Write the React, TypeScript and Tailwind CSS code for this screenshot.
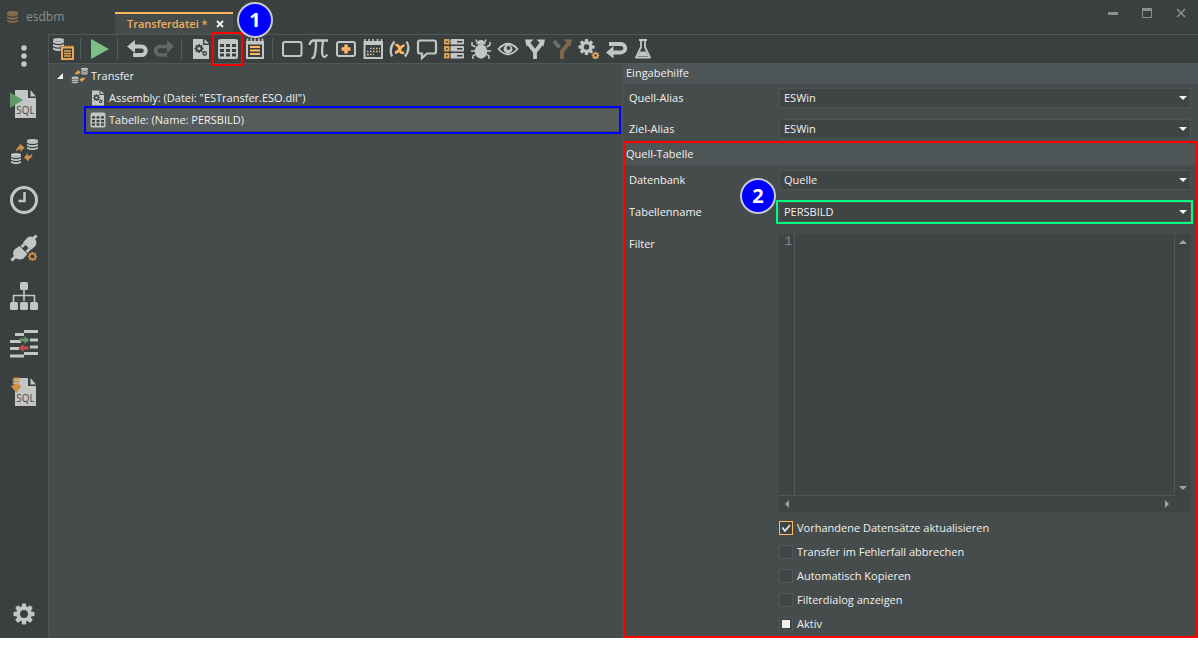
import { useState } from "react";
import type { ReactNode } from "react";

const LIGHT = "#c4c6c5";
const ORANGE = "#e9a654";
const DARK = "#3a4040";

function Icon({ size = 24, children }: { size?: number; children: ReactNode }) {
  return (
    <svg width={size} height={size} viewBox="0 0 24 24" fill="none" className="shrink-0" aria-hidden="true">
      {children}
    </svg>
  );
}

function Gear({ x, y, r, hole, color }: { x: number; y: number; r: number; hole: number; color: string }) {
  const w = r * 0.42;
  return (
    <g transform={`translate(${x} ${y})`}>
      {[0, 45, 90, 135].map((a) => (
        <rect key={a} x={-w / 2} y={-r} width={w} height={r * 2} rx={w / 4} fill={color} transform={`rotate(${a})`} />
      ))}
      <circle r={r * 0.74} fill={color} />
      <circle r={hole} fill={DARK} />
    </g>
  );
}

function Database({ x, y, w, h, color = LIGHT }: { x: number; y: number; w: number; h: number; color?: string }) {
  const step = h / 4;
  return (
    <g fill={color}>
      <ellipse cx={x + w / 2} cy={y + step / 2} rx={w / 2} ry={step / 2} />
      {[1, 2, 3].map((i) => (
        <path
          key={i}
          d={`M${x} ${y + i * step - step * 0.3} q${w / 2} ${step * 0.8} ${w} 0 v${step * 0.55} q${-w / 2} ${step * 0.9} ${-w} 0z`}
        />
      ))}
    </g>
  );
}

function TransferShapes() {
  return (
    <>
      <Database x={13.5} y={1} w={9} h={10} />
      <Database x={1} y={12.5} w={9} h={10} />
      <path d="M5 11Q5.500 6.500 8.500 5.800V3.800L13 7 8.500 10.500V8.800Q6.500 9 5 11z" fill={ORANGE} />
      <path d="M19 13Q18.500 17.500 15.500 18.200v2L11 17l4.500-3.500v1.700Q17.500 15 19 13z" fill={ORANGE} />
    </>
  );
}

function AssemblyIcon({ size }: { size?: number }) {
  return (
    <Icon size={size}>
      <path d="M4 2h10v6h6v14H4z" fill={LIGHT} />
      <path d="M15.5 2L20 6.500h-4.500z" fill={LIGHT} />
      <Gear x={10} y={11.5} r={4.5} hole={1.5} color={DARK} />
      <circle cx="10" cy="11.5" r="1.5" fill={LIGHT} />
      <circle cx="15.7" cy="16.5" r="1.7" stroke={DARK} strokeWidth="1.4" />
    </Icon>
  );
}

function TableIcon({ size }: { size?: number }) {
  return (
    <Icon size={size}>
      <rect x="2" y="2" width="20" height="20" rx="2.5" fill={LIGHT} />
      {[7, 12, 16.5].map((y) =>
        [4, 10, 16].map((x) => <rect key={`${x}-${y}`} x={x} y={y} width="4" height="3" fill={DARK} />),
      )}
    </Icon>
  );
}

function NoteIcon() {
  return (
    <Icon>
      <path d="M3 4h18v18H3z" fill={LIGHT} />
      <path d="M4.5 1.5v3M8.2 1.5v3M12 1.5v3M15.8 1.5v3M19.5 1.5v3" stroke={LIGHT} strokeWidth="1.6" />
      <path d="M5 7.5h14V20H5z" fill={DARK} />
      <path d="M7 10h10M7 13.5h10M7 17h10" stroke="#ffb861" strokeWidth="1.8" />
    </Icon>
  );
}

function SqlPage() {
  return (
    <>
      <path d="M5 -2h13v8h8v20H5z" fill={LIGHT} />
      <path d="M20.5 -2L26 4.5h-5.500z" fill={LIGHT} />
      <text x="15.5" y="22" textAnchor="middle" fontSize="10" fontFamily="Open Sans, sans-serif" fontWeight="500" fill="#454c4b">
        SQL
      </text>
    </>
  );
}

function BigIcon({ children }: { children: ReactNode }) {
  return (
    <svg width="32" height="32" viewBox="-2 -4 32 32" fill="none" aria-hidden="true">
      {children}
    </svg>
  );
}

const toolGroups: { label: string; icon: ReactNode }[][] = [
  [
    {
      label: "Transferdatei",
      icon: (
        <Icon>
          <Database x={2} y={1} w={11} h={14} />
          <path d="M9.5 9H23v14H9.5z" fill={DARK} />
          <path d="M11 10.5h11V22H11z" stroke={ORANGE} strokeWidth="2" />
          <path d="M12 8.5v2M15 8.5v2M18 8.5v2M21 8.5v2M13 14h7M13 16.5h7M13 19h7" stroke={ORANGE} strokeWidth="1.3" />
        </Icon>
      ),
    },
  ],
  [{ label: "Ausführen", icon: <Icon><path d="M3 2l18 10L3 22z" fill="#7cc083" /></Icon> }],
  [
    {
      label: "Rückgängig",
      icon: (
        <Icon>
          <path d="M2 9.5L10 3v13z" fill={LIGHT} />
          <path d="M8 9.5h8.500a4.300 4.300 0 0 1 0 8.600H8" stroke={LIGHT} strokeWidth="4" />
        </Icon>
      ),
    },
    {
      label: "Wiederholen",
      icon: (
        <Icon>
          <path d="M22 9.5L15 3v13z" fill="#626867" />
          <path d="M16 9.5H8a4.300 4.300 0 0 0 0 8.600h7" stroke="#626867" strokeWidth="3.5" />
        </Icon>
      ),
    },
  ],
  [
    { label: "Assembly", icon: <AssemblyIcon /> },
    { label: "Tabelle", icon: <TableIcon /> },
    { label: "Protokoll", icon: <NoteIcon /> },
  ],
  [
    { label: "Block", icon: <Icon><rect x="3" y="5" width="18.5" height="14" rx="2" stroke={LIGHT} strokeWidth="2" /></Icon> },
    {
      label: "Konstante",
      icon: (
        <Icon>
          <path
            d="M2.500 8q1-4.500 4.500-4.500h14M9 4q0 10-1.500 15-1 2.500-3 1.500M16 4q-1.500 10-.5 14 1.500 4.500 4.700-.5"
            stroke={LIGHT}
            strokeWidth="2.3"
          />
        </Icon>
      ),
    },
    {
      label: "Hinzufügen",
      icon: (
        <Icon>
          <rect x="3" y="5" width="18" height="14" rx="2" stroke={LIGHT} strokeWidth="2" />
          <path d="M12 7.5v9M7.5 12h9" stroke="#ffb861" strokeWidth="3.5" />
        </Icon>
      ),
    },
    {
      label: "Kalender",
      icon: (
        <Icon>
          <path d="M3.5 5H21v16H3.5z" stroke={LIGHT} strokeWidth="2" />
          <path d="M3 6.5h18.500" stroke={LIGHT} strokeWidth="3" />
          <path d="M4 2v3M8 2v3M12 2v3M16.5 2v3M20.5 2v3" stroke={LIGHT} strokeWidth="1.6" />
          <path d="M9 11.5h6M6 14.5h9M6 17.5h7" stroke={LIGHT} strokeWidth="1.6" strokeDasharray="1.6 1.4" />
          <path d="M15 11.5h4M15 14.5h4M6 17.5h1.600" stroke="#ffb861" strokeWidth="1.6" strokeDasharray="1.6 1.4" />
        </Icon>
      ),
    },
    {
      label: "Variable",
      icon: (
        <Icon>
          <path d="M6.500 4.500Q.5 11.500 4 19.500M18.500 4.500q4.500 7-1.500 15" stroke={LIGHT} strokeWidth="2.2" />
          <path d="M7.500 8.500q3-1.500 4 3.500t4.500 3.500M16.500 8.500q-2.500 0-4.500 3.500T7 15.500" stroke="#ffb861" strokeWidth="2.6" />
        </Icon>
      ),
    },
    {
      label: "Meldung",
      icon: (
        <Icon>
          <path d="M5 3.500h14a2 2 0 0 1 2 2v9a2 2 0 0 1-2 2h-7L7 21v-4.500H5a2 2 0 0 1-2-2v-9a2 2 0 0 1 2-2z" stroke={LIGHT} strokeWidth="2.2" />
        </Icon>
      ),
    },
    {
      label: "Liste",
      icon: (
        <Icon>
          {[2, 9, 16].map((y) => (
            <g key={y}>
              <rect x="3" y={y + 1} width="3.5" height="3.5" stroke={ORANGE} strokeWidth="1.8" />
              <rect x="8.5" y={y} width="13.5" height="5.5" rx="1" fill={LIGHT} />
              <path d={`M15 ${y + 2.75}h5.500`} stroke={DARK} strokeWidth="1.6" />
            </g>
          ))}
        </Icon>
      ),
    },
    {
      label: "Debug",
      icon: (
        <Icon>
          <path
            d="M8 5.500L7 2.500M16 5.500l1-3M6.500 10L3 8V5M17.500 10L21 8V5M6 14H2M18 14h4M7 17l-3 2v3M17 17l3 2v3"
            stroke={LIGHT}
            strokeWidth="1.5"
          />
          <path d="M7.500 7.500Q8 3 12 3t4.500 4.500z" fill={LIGHT} />
          <ellipse cx="12" cy="14.5" rx="6.2" ry="7.2" fill={LIGHT} />
        </Icon>
      ),
    },
    {
      label: "Überwachen",
      icon: (
        <Icon>
          <path d="M2.500 12Q12 1.500 21.500 12 12 22.500 2.500 12z" stroke={LIGHT} strokeWidth="1.8" />
          <circle cx="12" cy="12" r="4.4" fill={LIGHT} />
          <circle cx="12.5" cy="11" r="1.9" fill={DARK} />
        </Icon>
      ),
    },
    {
      label: "Verzweigung",
      icon: (
        <Icon>
          <path d="M12 22v-8M12 15L5.500 6.500M12 15l6.500-8.500" stroke={LIGHT} strokeWidth="3.8" />
          <path d="M2 2.500h8.500l-7 7zM22 2.500h-8.500l7 7z" fill={LIGHT} />
        </Icon>
      ),
    },
    {
      label: "Alternative",
      icon: (
        <Icon>
          <path d="M4 4l5.500 6.500" stroke="#6b706f" strokeWidth="3.5" />
          <path d="M12 22v-7.500L18 7" stroke="#80684a" strokeWidth="3.8" />
          <path d="M22 2.500h-8.500l7 7z" fill="#80684a" />
        </Icon>
      ),
    },
    {
      label: "Einstellungen",
      icon: (
        <Icon>
          <Gear x={9.5} y={10} r={8} hole={2.7} color={LIGHT} />
          <Gear x={18.5} y={18.5} r={3.8} hole={1.2} color={ORANGE} />
        </Icon>
      ),
    },
    {
      label: "Rücksprung",
      icon: (
        <Icon>
          <path d="M2 15.500L9.500 9v12.500z" fill={LIGHT} />
          <path d="M8 15.500h9a4 4 0 0 0 0-8.500H5" stroke={LIGHT} strokeWidth="3.8" />
        </Icon>
      ),
    },
    {
      label: "Test",
      icon: (
        <Icon>
          <path d="M8 3h8M10 3v7L5 20.500h14L14 10V3" stroke={LIGHT} strokeWidth="1.8" strokeLinejoin="round" />
          <path d="M9 14.500h6l2.500 4.500h-11z" fill={LIGHT} />
        </Icon>
      ),
    },
  ],
];

const sideItems: { label: string; icon: ReactNode }[] = [
  {
    label: "SQL ausführen",
    icon: (
      <BigIcon>
        <SqlPage />
        <path d="M0 .5L13 8 0 16z" fill="#5f9968" />
      </BigIcon>
    ),
  },
  {
    label: "Transfer",
    icon: (
      <BigIcon>
        <Database x={17} y={-1} w={11} h={12} />
        <Database x={1} y={13} w={10} h={12} />
        <path d="M6 11.500Q6.500 7 9.500 6V3.500L14.500 7.500 10.500 12V9Q8.500 9 6 11.500z" fill="#cf9248" />
        <path d="M22.500 13.500Q22 18 19 19v2.500L14 17.500l4-4.500v3Q20 16 22.500 13.500z" fill="#cf9248" />
      </BigIcon>
    ),
  },
  {
    label: "Verlauf",
    icon: (
      <BigIcon>
        <circle cx="14" cy="12" r="12.5" stroke={LIGHT} strokeWidth="3" />
        <path d="M14.500 4v9H8.500" stroke={LIGHT} strokeWidth="2.5" />
      </BigIcon>
    ),
  },
  {
    label: "Verbindungen",
    icon: (
      <BigIcon>
        <path d="M1.500 24.500l5-5M22 4l4.500-4.500M11.500 11l3-3M16.500 16l3-3" stroke={LIGHT} strokeWidth="3" />
        <path d="M4.500 13.500l5-3.500 8 8-4 4.500q-5 2.500-8.500-1t-.5-8z" fill={LIGHT} />
        <path d="M13 6.500L17 2q4-3 7.500.5t.5 8l-4.500 3.500z" fill={LIGHT} />
        <Gear x={22.5} y={20.5} r={4.5} hole={2} color="#cf9248" />
      </BigIcon>
    ),
  },
  {
    label: "Struktur",
    icon: (
      <BigIcon>
        <path d="M14 5v12M3.500 18v-6.500h21V18" stroke={LIGHT} strokeWidth="1.6" />
        <rect x="10" y="-2" width="8" height="8" rx="1.5" fill={LIGHT} />
        {[0, 10, 20].map((x) => (
          <rect key={x} x={x} y="18" width="8" height="8" rx="1.5" fill={LIGHT} />
        ))}
      </BigIcon>
    ),
  },
  {
    label: "Vergleich",
    icon: (
      <BigIcon>
        <path
          d="M14 -.5h14M5 2.500h9M0 9.500h11M20 8h8M0 16.500h9M20 15h8M14 21.500h14M0 24h14"
          stroke={LIGHT}
          strokeWidth="3"
        />
        <path d="M9.500 6.500h5v-2.500L19.500 8l-5 4V9.500h-5z" fill="#5f9968" />
        <path d="M18.500 14.500h-5V12l-5 4 5 4v-2.500h5z" fill="#c34b4b" />
      </BigIcon>
    ),
  },
  {
    label: "SQL importieren",
    icon: (
      <BigIcon>
        <SqlPage />
        <path d="M3.500 -2.500h6v8H12L6.500 13 .5 5.500h3z" fill="#cf9248" />
        <path d="M2.500 0h8M2.500 3h8" stroke={LIGHT} strokeWidth="1" />
      </BigIcon>
    ),
  },
];

function StepBadge({ children, className }: { children: ReactNode; className: string }) {
  return (
    <span
      className={`absolute z-20 flex size-9 items-center justify-center rounded-full border-2 border-[#c8c8d0] bg-[#0000ff] font-['Open_Sans',sans-serif] text-xl font-bold text-white ${className}`}
    >
      {children}
    </span>
  );
}

function SelectRow({ id, label, options, children }: { id: string; label: string; options: string[]; children?: ReactNode }) {
  return (
    <div className="grid grid-cols-[150px_1fr] items-center">
      <label htmlFor={id}>{label}</label>
      <div className="relative">
        <select
          id={id}
          className="block h-5 w-full appearance-none border border-[#4c5554] bg-[#3e4544] px-1 leading-4 text-[#f1f1f1] outline-none"
        >
          {options.map((o) => (
            <option key={o}>{o}</option>
          ))}
        </select>
        <svg width="8" height="4" viewBox="0 0 8 4" className="pointer-events-none absolute top-2 right-1" aria-hidden="true">
          <path d="M0 0h8L4 4z" fill="#f4f4f4" />
        </svg>
        {children}
      </div>
    </div>
  );
}

function CheckRow({ label, checked, mixed }: { label: string; checked?: boolean; mixed?: boolean }) {
  const [on, setOn] = useState(!!checked);
  return (
    <label className="flex h-6 items-center gap-1">
      <span className="relative flex size-3.5">
        <input
          type="checkbox"
          checked={on}
          onChange={(e) => setOn(e.target.checked)}
          className="size-3.5 appearance-none border border-[#4f5857] bg-[#3e4544] checked:border-[#ffb861]"
        />
        {on && (
          <svg viewBox="0 0 14 14" className="pointer-events-none absolute inset-0 size-3.5" aria-hidden="true">
            <path d="M3.500 6.500L6 10l5-6" fill="none" stroke="#f1f1f1" strokeWidth="1.6" />
          </svg>
        )}
        {mixed && !on && <span className="pointer-events-none absolute inset-[3px] bg-[#f1f1f1]" />}
      </span>
      {label}
    </label>
  );
}

function TitleBar() {
  return (
    <header className="flex h-[34px] shrink-0 justify-between">
      <div className="flex">
        <div className="flex w-[115px] items-center gap-1.5 pl-1 text-[#8b8f8e]">
          <svg width="16" height="16" viewBox="0 0 16 16" aria-hidden="true">
            <Database x={3} y={2} w={11} h={13} color="#8a6e4b" />
          </svg>
          <span className="text-xs">esdbm</span>
        </div>
        <div className="relative mt-3 flex w-[118px] items-center border-t-2 border-[#ffb861] bg-[#454c4b] pl-3">
          <span className="font-semibold whitespace-nowrap text-[#f0ae5e]">Transferdatei *</span>
          <button type="button" aria-label="Schließen" className="mr-1 ml-auto flex size-[18px] items-center justify-center">
            <svg width="8" height="8" viewBox="0 0 8 8" aria-hidden="true">
              <path d="M1 1l6 6M7 1L1 7" stroke="#f4f4f4" strokeWidth="1.8" />
            </svg>
          </button>
          <StepBadge className="-top-3 left-[122px]">1</StepBadge>
        </div>
      </div>
      <div className="flex h-[26px] items-center gap-2 pr-1">
        <button type="button" aria-label="Minimieren" className="flex size-[26px] items-center justify-center">
          <svg width="10" height="10" viewBox="0 0 10 10" aria-hidden="true">
            <path d="M0 5.500h10" stroke="#8b8f8e" strokeWidth="3" />
          </svg>
        </button>
        <button type="button" aria-label="Maximieren" className="flex size-[26px] items-center justify-center">
          <svg width="10" height="10" viewBox="0 0 10 10" fill="none" aria-hidden="true">
            <path d="M.5 .5h9v9h-9z" stroke="#8b8f8e" />
            <path d="M0 1.500h10" stroke="#8b8f8e" strokeWidth="3" />
          </svg>
        </button>
        <button type="button" aria-label="Beenden" className="flex size-[26px] items-center justify-center">
          <svg width="10" height="10" viewBox="0 0 10 10" aria-hidden="true">
            <path d="M1 1l8 8M9 1L1 9" stroke="#8b8f8e" strokeWidth="1.5" />
          </svg>
        </button>
      </div>
    </header>
  );
}

function SideBar() {
  return (
    <nav className="flex w-12 shrink-0 flex-col items-center">
      <button type="button" aria-label="Menü" className="flex h-[46px] w-full items-center justify-center">
        <svg width="6" height="24" viewBox="0 0 6 24" fill={LIGHT} aria-hidden="true">
          <circle cx="3" cy="3" r="2.8" />
          <circle cx="3" cy="11" r="2.8" />
          <circle cx="3" cy="19" r="2.8" />
        </svg>
      </button>
      {sideItems.map((item) => (
        <button key={item.label} type="button" aria-label={item.label} className="flex size-12 items-center justify-center">
          {item.icon}
        </button>
      ))}
      <button type="button" aria-label="Optionen" className="mt-auto flex size-12 items-center justify-center">
        <Icon>
          <Gear x={12} y={12} r={10.5} hole={4} color={LIGHT} />
        </Icon>
      </button>
    </nav>
  );
}

function ToolBar() {
  return (
    <div className="flex h-[30px] shrink-0 items-center border-y border-[#4f5857]" role="toolbar">
      {toolGroups.map((group, i) => (
        <div key={i} className="flex items-center">
          {i > 0 && <span className="mx-1 h-[22px] w-0.5 border-l border-[#535b5a]" />}
          {group.map((tool) => (
            <button key={tool.label} type="button" aria-label={tool.label} className="relative flex h-7 w-[27px] items-center justify-center">
              {tool.icon}
              {tool.label === "Tabelle" && <span className="absolute -inset-x-0.5 -inset-y-[3px] border-2 border-[#ff0000]" />}
            </button>
          ))}
        </div>
      ))}
    </div>
  );
}

function Tree() {
  return (
    <ul className="min-w-0 pt-px">
      <li>
        <div className="flex h-[22px] items-center gap-0.5 pl-2">
          <svg width="6" height="6" viewBox="0 0 6 6" className="mr-1.5" aria-hidden="true">
            <path d="M6 0v6H0z" fill="#f4f4f4" />
          </svg>
          <Icon size={18}>
            <TransferShapes />
          </Icon>
          Transfer
        </div>
        <ul>
          <li className="flex h-[22px] items-center gap-0.5 pl-10">
            <AssemblyIcon size={18} />
            Assembly: (Datei: "ESTransfer.ESO.dll")
          </li>
          <li className="relative mr-px ml-[35px] flex h-[22px] items-center gap-0.5 bg-[#565b5c] pl-[5px]">
            <TableIcon size={18} />
            Tabelle: (Name: PERSBILD)
            <span className="absolute inset-x-0 -inset-y-[3px] border-2 border-[#0000ff]" />
          </li>
        </ul>
      </li>
    </ul>
  );
}

function FilterEditor() {
  return (
    <div className="grid flex-1 grid-cols-[150px_1fr]">
      <label htmlFor="filter" className="h-5 leading-5">Filter</label>
      <div className="grid grid-cols-[1fr_16px] grid-rows-[1fr_16px] bg-[#3e4544]">
        <div className="flex border-r border-b border-[#4f5857]">
          <span className="w-4 border-r border-dotted border-[#6b7170] pr-0.5 text-right font-['Liberation_Mono',monospace] text-xs text-[#858a89]">
            1
          </span>
          <textarea
            id="filter"
            className="min-w-0 flex-1 resize-none bg-transparent px-1 font-['Liberation_Mono',monospace] text-xs outline-none"
          />
        </div>
        <div className="flex flex-col items-center justify-between py-1.5">
          <svg width="8" height="4" viewBox="0 0 8 4" aria-hidden="true">
            <path d="M0 4h8L4 0z" fill="#a0a3a3" />
          </svg>
          <svg width="8" height="4" viewBox="0 0 8 4" aria-hidden="true">
            <path d="M0 0h8L4 4z" fill="#a0a3a3" />
          </svg>
        </div>
        <div className="flex items-center justify-between px-1.5">
          <svg width="4" height="8" viewBox="0 0 4 8" aria-hidden="true">
            <path d="M4 0v8L0 4z" fill="#a0a3a3" />
          </svg>
          <svg width="4" height="8" viewBox="0 0 4 8" aria-hidden="true">
            <path d="M0 0v8l4-4z" fill="#a0a3a3" />
          </svg>
        </div>
      </div>
    </div>
  );
}

function InputPanel() {
  return (
    <section className="flex min-w-0 flex-col border-l border-[#4f5857]">
      <div className="pl-px">
        <h2 className="h-5 bg-[#4d5557] px-0.5 leading-[18px]">Eingabehilfe</h2>
        <div className="flex flex-col gap-[11px] pt-1 pr-[7px] pb-0.5 pl-[5px]">
          <SelectRow id="source-alias" label="Quell-Alias" options={["ESWin"]} />
          <SelectRow id="target-alias" label="Ziel-Alias" options={["ESWin"]} />
        </div>
      </div>
      <div className="flex flex-1 flex-col border-2 border-[#ff0000]">
        <h2 className="h-[22px] bg-[#4d5557] px-px leading-[22px]">Quell-Tabelle</h2>
        <div className="flex flex-1 flex-col gap-3 pt-[5px] pr-[5px] pl-1">
          <SelectRow id="database" label="Datenbank" options={["Quelle", "Ziel"]} />
          <SelectRow id="table-name" label="Tabellenname" options={["PERSBILD"]}>
            <span className="pointer-events-none absolute -inset-y-0.5 -right-0.5 -left-[3px] border-2 border-[#00ff80]" />
            <StepBadge className="-top-6 right-full mr-[3px]">2</StepBadge>
          </SelectRow>
          <FilterEditor />
          <div className="-mt-2 pl-[150px]">
            <CheckRow label="Vorhandene Datensätze aktualisieren" checked />
            <CheckRow label="Transfer im Fehlerfall abbrechen" />
            <CheckRow label="Automatisch Kopieren" />
            <CheckRow label="Filterdialog anzeigen" />
            <CheckRow label="Aktiv" mixed />
          </div>
        </div>
      </div>
    </section>
  );
}

export default function App() {
  return (
    <div className="flex h-screen flex-col bg-white pb-3 font-['Open_Sans','Noto_Sans',sans-serif] text-[11px] leading-4 text-[#f1f1f1]">
      <div className="flex min-h-0 flex-1 flex-col bg-[#3a4040]">
        <TitleBar />
        <div className="flex min-h-0 flex-1">
          <SideBar />
          <main className="flex min-w-0 flex-1 flex-col border-l border-[#4c5553]">
            <ToolBar />
            <div className="grid min-h-0 flex-1 grid-cols-[573fr_576fr] bg-[#454c4b]">
              <Tree />
              <InputPanel />
            </div>
          </main>
        </div>
      </div>
    </div>
  );
}
